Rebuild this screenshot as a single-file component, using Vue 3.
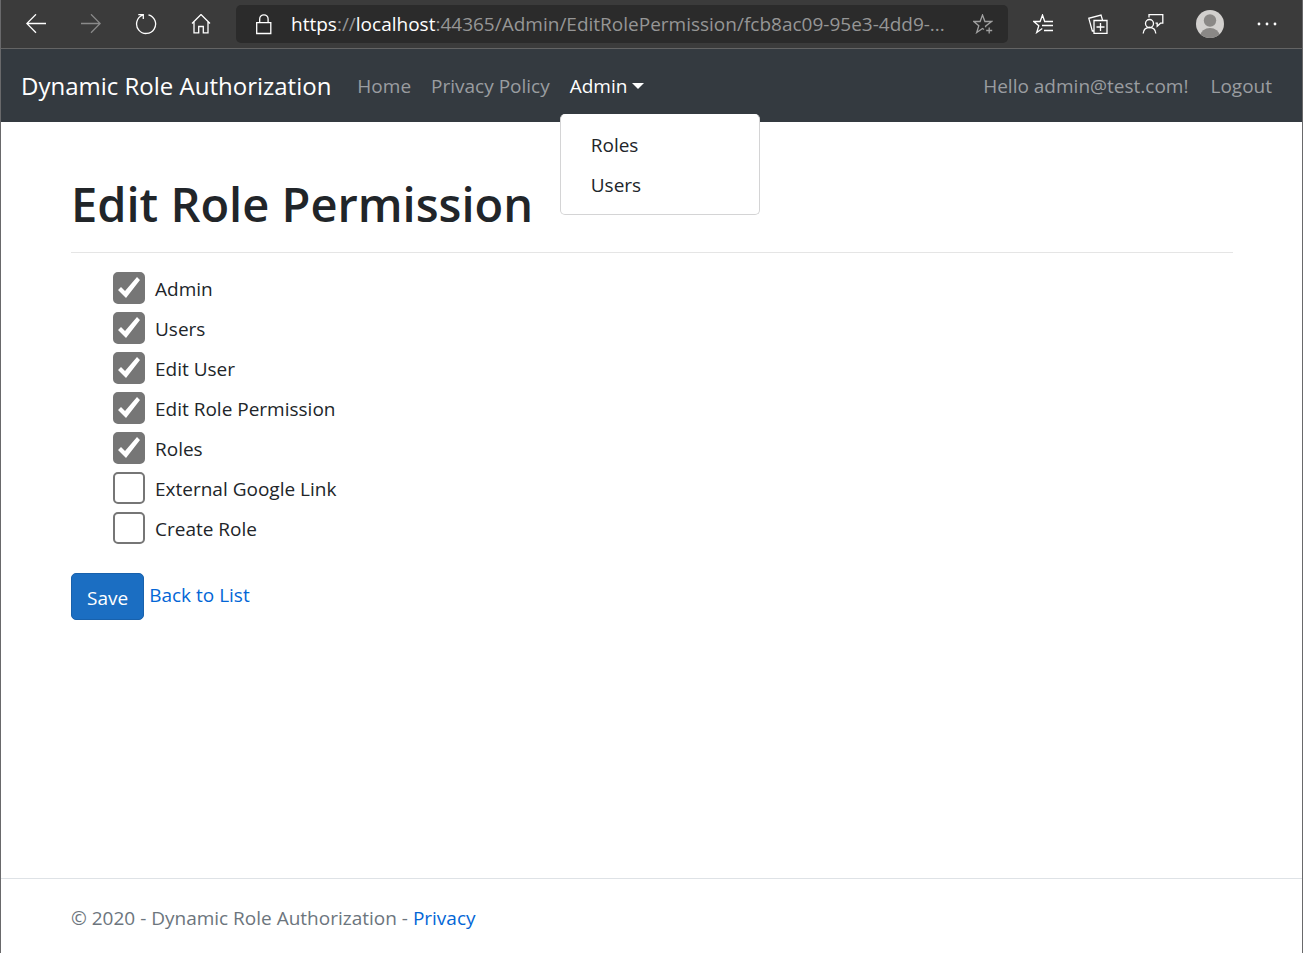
<script setup>
import { ref } from 'vue'

const permissions = ref([
  { id: 'admin', name: 'Admin', granted: true },
  { id: 'users', name: 'Users', granted: true },
  { id: 'edit-user', name: 'Edit User', granted: true },
  { id: 'edit-role-permission', name: 'Edit Role Permission', granted: true },
  { id: 'roles', name: 'Roles', granted: true },
  { id: 'external-google-link', name: 'External Google Link', granted: false },
  { id: 'create-role', name: 'Create Role', granted: false },
])
const menuOpen = ref(true)
</script>

<template>
  <div class="window">
    <div class="toolbar">
      <button class="tool" aria-label="Back">
        <svg width="20" height="20" viewBox="0 0 20 20"><path d="M20 9.500H.8M10 .3.8 9.500l9.200 9.200" /></svg>
      </button>
      <button class="tool dim" aria-label="Forward" disabled>
        <svg width="20" height="20" viewBox="0 0 20 20"><path d="M0 9.500h19.200M10 .3l9.200 9.200-9.200 9.200" /></svg>
      </button>
      <button class="tool" aria-label="Refresh">
        <svg width="22" height="22" viewBox="-1 -1 22 22"><path d="M12.500 .8A9.500 9.500 0 1 1 6.500 1.200M2.300.7h5V5" /></svg>
      </button>
      <button class="tool" aria-label="Home">
        <svg width="20" height="20" viewBox="0 0 20 20"><path d="M1 9.500 10 .5l9 9M3 8v10.800h4.700v-6.300h4.600v6.300H17V8" /></svg>
      </button>
      <div class="address">
        <svg class="lock" width="20" height="22" viewBox="0 0 20 22"><path d="M2.700 9.700h14.100v10.800H2.700zM5.700 9.700V6a4.200 4.200 0 0 1 8.400 0v3.700" /></svg>
        <div class="url" role="textbox" aria-label="Address" tabindex="0"><b>https</b>://<b>localhost</b>:44365/Admin/EditRolePermission/fcb8ac09-95e3-4dd9-...</div>
        <button class="favorite" aria-label="Add to favorites">
          <svg width="20" height="20" viewBox="0 0 20 20"><path d="M13 13.200 12.500 12.200 18.500 7.500H11.900L9.500 1 7.100 7.500H.8l5 4.300L3.700 18.500l5.800-4 1.500 1M16.200 13.500v6M13.200 16.500h6" /></svg>
        </button>
      </div>
      <button class="tool" aria-label="Favorites">
        <svg width="20" height="20" viewBox="0 0 20 20"><path d="M14 7.500h-2.300L9.500 1 7.100 7.500H.8l5 4.300L3.700 18.500l5.600-4M11 7.500h9M9 11.500h11M11 16.500h9" /></svg>
      </button>
      <button class="tool" aria-label="Collections">
        <svg width="20" height="20" viewBox="0 0 20 20"><path d="M6 6.500h13v13H6zM12.500 9v8M8.500 13h8M14.500 6 13 1 .8 4.300 4.300 17 6 16.500" /></svg>
      </button>
      <button class="tool" aria-label="Send feedback">
        <svg width="22" height="20" viewBox="0 0 22 20"><circle cx="7.500" cy="9.500" r="4" /><path d="M1.200 19.500c.3-4 2.800-6 6.300-6s6 2 6.300 6M7 3.500V.7h13.800v8.500h-2.300l-3.300 3V9.200h-1.700" /></svg>
      </button>
      <button class="tool profile" aria-label="Profile">
        <svg width="28" height="28" viewBox="0 0 28 28">
          <defs><clipPath id="disc"><circle cx="14" cy="14" r="14" /></clipPath></defs>
          <g clip-path="url(#disc)">
            <rect class="disc" width="28" height="28" />
            <circle class="person" cx="14" cy="10.500" r="6.200" />
            <ellipse class="person" cx="14" cy="25.500" rx="9.500" ry="7.500" />
          </g>
        </svg>
      </button>
      <button class="tool" aria-label="Settings and more">
        <svg class="dots" width="20" height="20" viewBox="0 0 20 20"><circle cx="2" cy="10" r="1.400" /><circle cx="10" cy="10" r="1.400" /><circle cx="18" cy="10" r="1.400" /></svg>
      </button>
    </div>

    <header class="navbar">
      <a class="brand" href="#">Dynamic Role Authorization</a>
      <nav class="links">
        <a href="#">Home</a>
        <a href="#">Privacy Policy</a>
        <div class="dropdown">
          <button class="toggle" :aria-expanded="menuOpen" @click="menuOpen = !menuOpen">Admin<span class="caret"></span></button>
          <div v-if="menuOpen" class="menu">
            <a href="#">Roles</a>
            <a href="#">Users</a>
          </div>
        </div>
      </nav>
      <div class="account">
        <span>Hello admin@test.com!</span>
        <button>Logout</button>
      </div>
    </header>

    <main>
      <h1>Edit Role Permission</h1>
      <form @submit.prevent>
        <ul>
          <li v-for="item in permissions" :key="item.id">
            <input :id="item.id" v-model="item.granted" type="checkbox" />
            <label :for="item.id">{{ item.name }}</label>
          </li>
        </ul>
        <div class="actions">
          <button type="submit">Save</button>
          <a href="#">Back to List</a>
        </div>
      </form>
    </main>

    <footer>© 2020 - Dynamic Role Authorization - <a href="#">Privacy</a></footer>
  </div>
</template>

<style>
body {
  margin: 0;
  background: #fff;
}
</style>

<style scoped>
* {
  box-sizing: border-box;
}
.window {
  display: flex;
  flex-direction: column;
  min-height: 100vh;
  border: solid #69696b;
  border-width: 0 1px;
  color: #212529;
  font: 19px/30px 'Open Sans', 'Noto Sans', sans-serif;
}
button {
  padding: 0;
  border: 0;
  background: none;
  color: inherit;
  font: inherit;
}
a {
  color: #0366d6;
  text-decoration: none;
}
svg {
  display: block;
  fill: none;
  stroke: currentColor;
  stroke-width: 1.3;
}
.toolbar {
  display: flex;
  align-items: center;
  height: 49px;
  padding: 0 8px 1px 7px;
  border-bottom: 1px solid #646464;
  background: #3b3b3b;
  color: #fff;
}
.tool {
  display: flex;
  flex: none;
  align-items: center;
  justify-content: center;
  width: 55px;
  height: 40px;
}
.dim {
  color: #8a8a8a;
}
.profile {
  width: 59px;
}
.disc {
  fill: #d2d0ce;
  stroke: none;
}
.person {
  fill: #8a8886;
  stroke: none;
}
.dots {
  fill: currentColor;
  stroke: none;
}
.address {
  display: flex;
  flex: 1;
  align-items: center;
  min-width: 0;
  height: 38px;
  margin: 0 7px 0 8px;
  padding: 0 15px 0 18px;
  border-radius: 5px;
  background: #2b2b2b;
}
.lock {
  flex: none;
}
.url {
  flex: 1;
  min-width: 0;
  margin-left: 17px;
  overflow: hidden;
  color: #969696;
  white-space: nowrap;
}
.url b {
  color: #fff;
  font-weight: 400;
}
.favorite {
  color: #a0a0a0;
}
.navbar {
  display: flex;
  align-items: center;
  height: 73px;
  padding: 0 30px 0 20px;
  background: #343a40;
  color: #9a9da0;
}
.navbar > .links > a {
  color: inherit;
}
.navbar .brand {
  margin-right: 26px;
  color: #fff;
  font-size: 24px;
}
.links {
  display: flex;
  gap: 20px;
}
.dropdown {
  position: relative;
}
.toggle {
  display: flex;
  align-items: center;
  color: #fff;
}
.caret {
  margin-left: 5px;
  border: 6px solid transparent;
  border-top-color: #fff;
  border-bottom: 0;
}
.menu {
  position: absolute;
  top: 43px;
  left: -10px;
  width: 200px;
  padding: 10px 0 9px;
  border: 1px solid #d4d4d5;
  border-top-color: #fff;
  border-radius: 5px;
  background: #fff;
}
.menu a {
  display: block;
  padding: 5px 30px;
  color: #212529;
}
.account {
  display: flex;
  gap: 22px;
  margin-left: auto;
}
main {
  flex: 1;
  padding: 52px 69px 0 70px;
}
h1 {
  margin: 0 0 19px;
  padding-bottom: 18px;
  border-bottom: 1px solid #e5e5e5;
  font-size: 47px;
  font-weight: 600;
  line-height: 60px;
}
ul {
  display: grid;
  gap: 8px;
  margin: 0;
  padding: 0 0 0 42px;
  list-style: none;
}
li {
  display: flex;
  align-items: center;
  gap: 10px;
}
li label {
  padding-top: 2px;
}
li input {
  width: 32px;
  height: 32px;
  margin: 0;
  border: 2px solid #767676;
  border-radius: 5px;
  appearance: none;
}
li input:checked {
  background: #767676;
}
li input:checked::before {
  display: block;
  width: 28px;
  height: 28px;
  background: #fff;
  clip-path: polygon(3px 16px, 6px 13px, 10px 17px, 22px 3px, 25px 6px, 11px 24px);
  content: '';
}
.actions {
  display: flex;
  gap: 5px;
  margin-top: 29px;
}
.actions button {
  height: 47px;
  padding: 2px 15px 0;
  border: 1px solid #1861ac;
  border-radius: 5px;
  background: #1b6ec2;
  color: #fff;
}
.actions a {
  padding-top: 7px;
}
footer {
  padding: 24px 70px 20px;
  border-top: 1px solid #dee2e6;
  color: #6c757d;
}
</style>
